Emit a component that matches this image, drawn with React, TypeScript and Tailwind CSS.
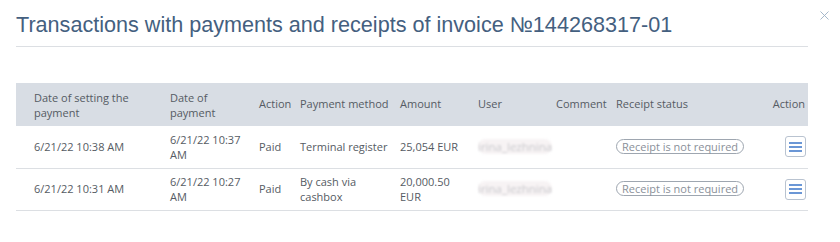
import { X } from "lucide-react";

type Row = {
  setAt: string;
  paidAt: string;
  action: string;
  method: string;
  amount: string;
  user: string;
};

const rows: Row[] = [
  {
    setAt: "6/21/22 10:38 AM",
    paidAt: "6/21/22 10:37 AM",
    action: "Paid",
    method: "Terminal register",
    amount: "25,054 EUR",
    user: "irina_lezhnina",
  },
  {
    setAt: "6/21/22 10:31 AM",
    paidAt: "6/21/22 10:27 AM",
    action: "Paid",
    method: "By cash via cashbox",
    amount: "20,000.50 EUR",
    user: "irina_lezhnina",
  },
];

function MenuButton() {
  return (
    <button className="w-[21px] h-[21px] rounded-[3px] border border-[#b9c3d0] bg-white flex flex-col items-center justify-center gap-[2px]">
      <span className="block w-[13px] h-[2px] bg-[#6b97d6]" />
      <span className="block w-[13px] h-[2px] bg-[#6b97d6]" />
      <span className="block w-[13px] h-[2px] bg-[#6b97d6]" />
    </button>
  );
}

export default function App() {
  return (
    <div className="w-[840px] h-[242px] bg-white relative font-['Open_Sans',sans-serif]">
      <button className="absolute right-[8px] top-[8px] text-[#9fb3c8]">
        <X size={15} strokeWidth={1.5} />
      </button>

      <div className="px-4 pt-[10px]">
        {/* Title */}
        <h1 className="font-['Liberation_Sans',sans-serif] text-[21.6px] leading-[30px] text-[#44607f] pb-[6px] border-b border-[#dcdfe3] mr-[16px]">
          Transactions with payments and receipts of invoice №144268317-01
        </h1>

        {/* Table */}
        <table className="mt-[36px] w-[792px] table-fixed border-collapse text-[11px] text-[#555b63]">
          <colgroup>
            <col className="w-[154px]" />
            <col className="w-[89px]" />
            <col className="w-[41px]" />
            <col className="w-[100px]" />
            <col className="w-[78px]" />
            <col className="w-[78px]" />
            <col className="w-[60px]" />
            <col className="w-[140px]" />
            <col />
          </colgroup>
          <thead>
            <tr className="bg-[#d8dde4] h-[43px] text-left">
              <th className="font-normal pl-[18px] pr-2 leading-[15px]">
                Date of setting the payment
              </th>
              <th className="font-normal pr-2 leading-[15px]">Date of payment</th>
              <th className="font-normal">Action</th>
              <th className="font-normal">Payment method</th>
              <th className="font-normal">Amount</th>
              <th className="font-normal">User</th>
              <th className="font-normal">Comment</th>
              <th className="font-normal">Receipt status</th>
              <th className="font-normal text-right pr-[3px]">Action</th>
            </tr>
          </thead>
          <tbody>
            {rows.map((r, i) => (
              <tr key={i} className="h-[42px] border-b border-[#dcdfe3]">
                <td className="pl-[18px]">{r.setAt}</td>
                <td className="pr-3 leading-[15px]">{r.paidAt}</td>
                <td>{r.action}</td>
                <td className="pr-3 leading-[15px]">{r.method}</td>
                <td className="pr-3 leading-[15px]">{r.amount}</td>
                <td>
                  <span className="blur-[1px] text-[#c8c8cc] text-[11.5px] bg-[#f7f3f4] rounded-full">
                    {r.user}
                  </span>
                </td>
                <td />
                <td>
                  <span className="inline-block border border-[#9ea6b0] rounded-full px-[5px] leading-[13px] text-[#8a9099]">
                    Receipt is not required
                  </span>
                </td>
                <td>
                  <div className="flex justify-end pr-[2px]">
                    <MenuButton />
                  </div>
                </td>
              </tr>
            ))}
          </tbody>
        </table>
      </div>
    </div>
  );
}
